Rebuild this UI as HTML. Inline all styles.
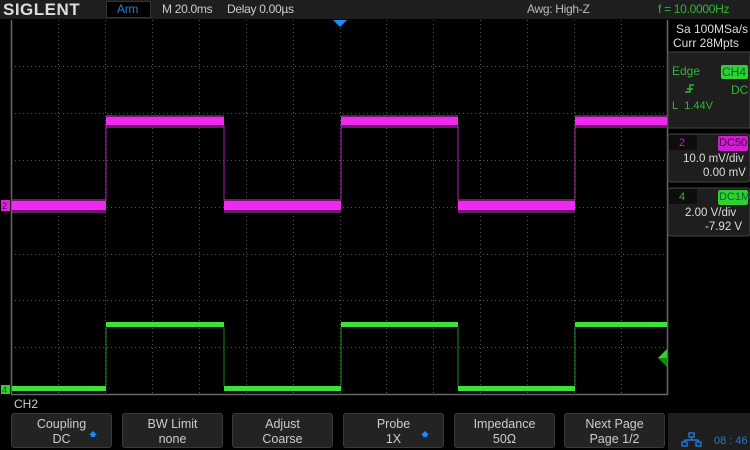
<!DOCTYPE html>
<html><head><style>
body{margin:0;width:750px;height:450px;background:#000;overflow:hidden;position:relative;font-family:"Liberation Sans",sans-serif;}
.a{position:absolute;}
.top{left:0;top:0;width:750px;height:19px;background:#1e1e1e;}
.t{position:absolute;font-size:12px;color:#ccc;top:2px;white-space:nowrap;letter-spacing:-0.3px}
.btn{position:absolute;top:413px;width:101px;height:35px;background:#232323;border:1px solid #3a3a3a;border-radius:3px;color:#ccc;font-size:12.5px;text-align:center;line-height:15px;box-sizing:border-box;padding-top:3px}
.arr{position:absolute;right:14px;top:17px;width:0;height:0;border-left:4px solid transparent;border-right:4px solid transparent;border-bottom:4px solid #1a8cff}
.arr:after{content:"";position:absolute;left:-2px;top:4px;width:4px;height:2px;background:#1a8cff}
.rp{color:#ddd;font-size:12px;position:absolute;white-space:nowrap}
</style></head><body>
<div class="a top"></div>
<div class="t" style="left:3px;top:0;font-size:17px;font-weight:bold;color:#ddd;letter-spacing:0.5px;">SIGLENT</div>
<div class="a" style="left:106px;top:1px;width:45px;height:17px;background:#000;border:1px solid #333;box-sizing:border-box"></div>
<div class="t" style="left:117px;color:#2a7fd8;">Arm</div>
<div class="t" style="left:162px;">M 20.0ms</div>
<div class="t" style="left:227px;">Delay 0.00µs</div>
<div class="t" style="left:527px;color:#bbb">Awg: High-Z</div>
<div class="t" style="left:658px;color:#2fb82f">f = 10.0000Hz</div>
<svg class="a" style="left:0;top:0" width="750" height="450">
<g stroke="#555" stroke-width="1" stroke-dasharray="1,3">
<line x1="58.5" y1="20" x2="58.5" y2="394"/><line x1="105.5" y1="20" x2="105.5" y2="394"/><line x1="152.5" y1="20" x2="152.5" y2="394"/><line x1="199.5" y1="20" x2="199.5" y2="394"/><line x1="246.5" y1="20" x2="246.5" y2="394"/><line x1="293.5" y1="20" x2="293.5" y2="394"/><line x1="340.5" y1="20" x2="340.5" y2="394"/><line x1="386.5" y1="20" x2="386.5" y2="394"/><line x1="433.5" y1="20" x2="433.5" y2="394"/><line x1="480.5" y1="20" x2="480.5" y2="394"/><line x1="527.5" y1="20" x2="527.5" y2="394"/><line x1="574.5" y1="20" x2="574.5" y2="394"/><line x1="621.5" y1="20" x2="621.5" y2="394"/>
<line x1="11" y1="66.5" x2="667" y2="66.5"/><line x1="11" y1="113.5" x2="667" y2="113.5"/><line x1="11" y1="160.5" x2="667" y2="160.5"/><line x1="11" y1="207.5" x2="667" y2="207.5"/><line x1="11" y1="254.5" x2="667" y2="254.5"/><line x1="11" y1="300.5" x2="667" y2="300.5"/><line x1="11" y1="347.5" x2="667" y2="347.5"/>
</g>
<path d="M11.5 20V394.5H667.5V20" fill="none" stroke="#666" stroke-width="1.5"/>
<g fill="#6a1a6a"><rect x="12" y="199" width="94" height="14"/><rect x="106" y="115" width="118" height="13"/><rect x="224" y="199" width="117" height="14"/><rect x="341" y="115" width="117" height="13"/><rect x="458" y="199" width="117" height="14"/><rect x="575" y="115" width="92" height="13"/></g>
<g fill="#f028f0"><rect x="12" y="201" width="94" height="9"/><rect x="106" y="117" width="118" height="8"/><rect x="224" y="201" width="117" height="9"/><rect x="341" y="117" width="117" height="8"/><rect x="458" y="201" width="117" height="9"/><rect x="575" y="117" width="92" height="8"/></g>
<g stroke="#b020b0" stroke-width="1"><line x1="106" y1="125" x2="106" y2="201"/><line x1="224" y1="125" x2="224" y2="201"/><line x1="341" y1="125" x2="341" y2="201"/><line x1="458" y1="125" x2="458" y2="201"/><line x1="575" y1="125" x2="575" y2="201"/></g>
<g fill="#3be23b"><rect x="12" y="386" width="94" height="5"/><rect x="106" y="322" width="118" height="5"/><rect x="224" y="386" width="117" height="5"/><rect x="341" y="322" width="117" height="5"/><rect x="458" y="386" width="117" height="5"/><rect x="575" y="322" width="92" height="5"/></g>
<g stroke="#1a8a1a" stroke-width="1"><line x1="106" y1="327" x2="106" y2="386"/><line x1="224" y1="327" x2="224" y2="386"/><line x1="341" y1="327" x2="341" y2="386"/><line x1="458" y1="327" x2="458" y2="386"/><line x1="575" y1="327" x2="575" y2="386"/></g>
<path d="M333 20H347L340 27Z" fill="#1a8cff"/>
<path d="M667 349V358H658Z" fill="#2fd02f"/><path d="M667 358V367L658 358Z" fill="#128a12"/>
<rect x="1" y="200" width="9" height="11" fill="#e020e0"/><text x="2" y="209" font-size="9" fill="#400040" font-family="Liberation Sans">2</text>
<rect x="1" y="385" width="9" height="9" fill="#2fd02f"/><text x="2" y="393" font-size="9" fill="#063" font-family="Liberation Sans">4</text>
<rect x="668" y="52" width="82" height="76" fill="#1e1e1e" stroke="#444"/>
<rect x="668" y="134" width="82" height="48" rx="3" fill="#1e1e1e" stroke="#444"/>
<rect x="669" y="135" width="28" height="15" fill="#0d0d0d"/>
<rect x="718" y="136" width="30" height="15" rx="2" fill="#d21ed2"/>
<rect x="668" y="188" width="82" height="48" rx="3" fill="#1e1e1e" stroke="#444"/>
<rect x="669" y="189" width="28" height="15" fill="#0d0d0d"/>
<rect x="718" y="190" width="30" height="15" rx="2" fill="#2fd02f"/>
<rect x="721" y="65" width="27" height="14" rx="2" fill="#2fd02f"/>
<path d="M685 92H690V85H694M687 89H693" fill="none" stroke="#2fb82f" stroke-width="1.4"/>
<rect x="668" y="413" width="82" height="37" fill="#1e1e1e"/>
<g fill="none" stroke="#1a7ae0" stroke-width="1.4"><rect x="689" y="433" width="5" height="4"/><rect x="682" y="442" width="5" height="4"/><rect x="696" y="442" width="5" height="4"/><path d="M691.5 437V440M684.5 440H698.5M684.5 440V442M698.5 440V442"/></g>
</svg>
<div class="rp" style="left:676px;top:22px;">Sa 100MSa/s</div>
<div class="rp" style="left:673px;top:36px;">Curr 28Mpts</div>
<div class="rp" style="left:672px;top:64px;color:#2fb82f">Edge</div>
<div class="rp" style="left:722px;top:65px;color:#063">CH4</div>
<div class="rp" style="left:731px;top:83px;color:#2fb82f">DC</div>
<div class="rp" style="left:672px;top:100px;color:#2fb82f;font-size:11px">L&nbsp; 1.44V</div>
<div class="rp" style="left:679px;top:137px;color:#c020c0;font-size:11px">2</div>
<div class="rp" style="left:719px;top:137px;color:#400040;font-size:11px">DC50</div>
<div class="rp" style="left:683px;top:153px;font-size:11.5px">10.0 mV/div</div>
<div class="rp" style="left:703px;top:167px;font-size:11.5px">0.00 mV</div>
<div class="rp" style="left:679px;top:191px;color:#2fb82f;font-size:11px">4</div>
<div class="rp" style="left:719px;top:191px;color:#063;font-size:11px">DC1M</div>
<div class="rp" style="left:685px;top:207px;font-size:11.5px">2.00 V/div</div>
<div class="rp" style="left:705px;top:221px;font-size:11.5px">-7.92 V</div>
<div class="rp" style="left:714px;top:435px;color:#1a7ae0;font-size:11px">08 : 46</div>
<div class="rp" style="left:14px;top:397px;font-size:12px;color:#ccc">CH2</div>
<div class="btn" style="left:11px">Coupling<br>DC<span class="arr"></span></div>
<div class="btn" style="left:122px">BW Limit<br>none</div>
<div class="btn" style="left:232px">Adjust<br>Coarse</div>
<div class="btn" style="left:343px">Probe<br>1X<span class="arr"></span></div>
<div class="btn" style="left:454px">Impedance<br>50Ω</div>
<div class="btn" style="left:564px">Next Page<br>Page 1/2</div>
</body></html>
